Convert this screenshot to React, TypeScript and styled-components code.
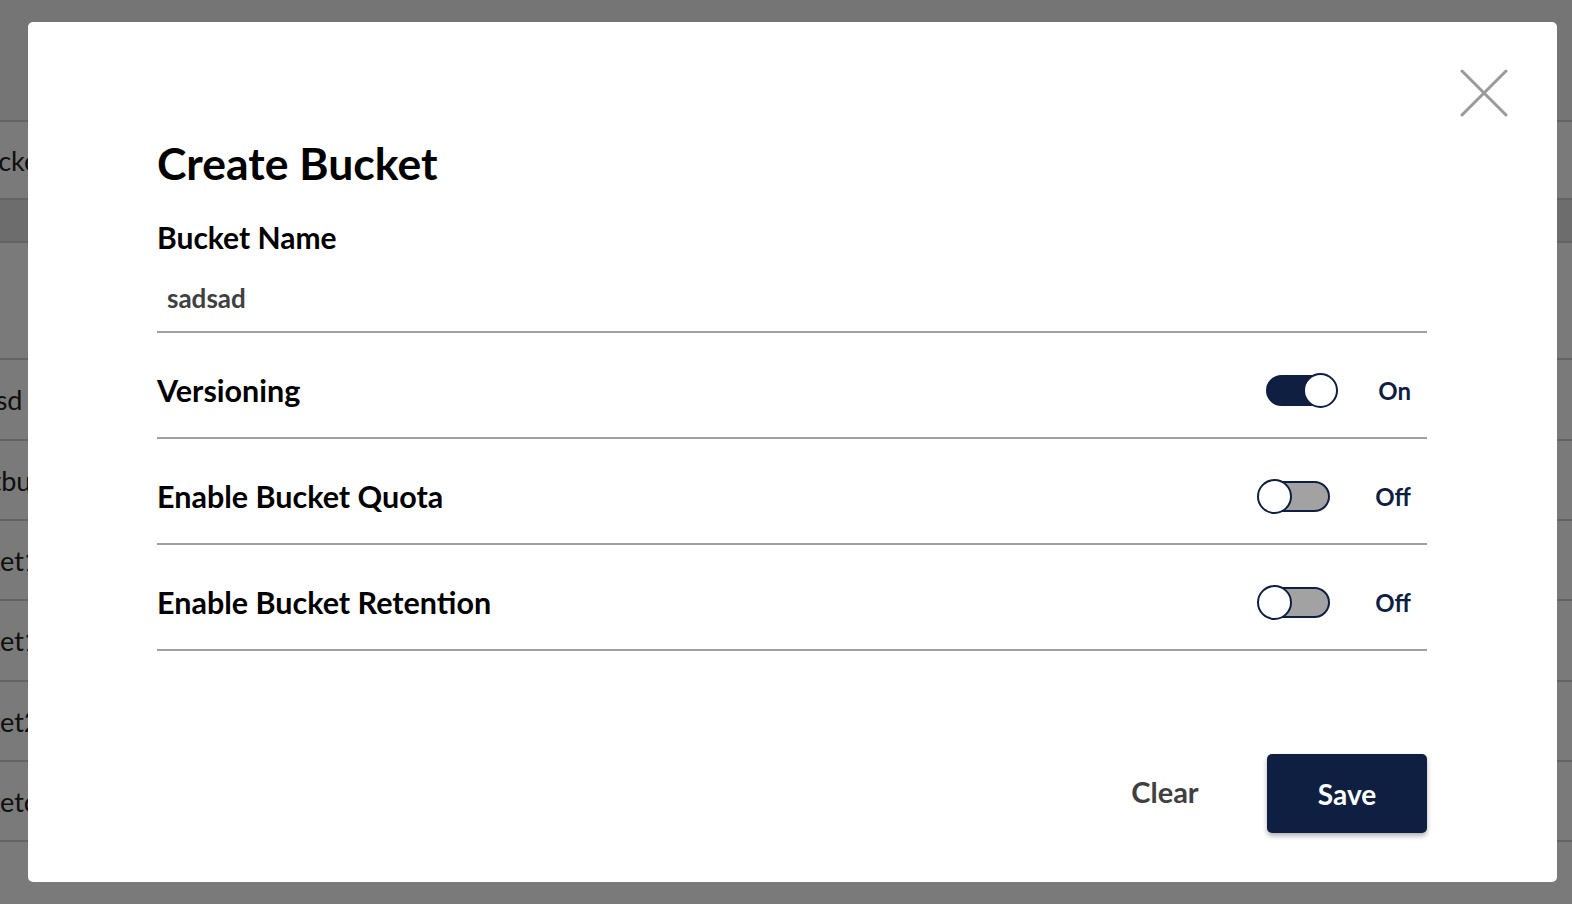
import React, { useState } from "react";
import styled, { createGlobalStyle } from "styled-components";

const navy = "#0f1f41";

const GlobalStyle = createGlobalStyle`
  html, body {
    margin: 0;
    padding: 0;
    width: 1572px;
    height: 904px;
    overflow: hidden;
    font-family: Lato, "Open Sans", "Liberation Sans", sans-serif;
    background: #fff;
  }
`;

/* underlying page, mostly hidden by the dialog */
const Page = styled.div`
  width: 1572px;
  height: 904px;
  overflow: hidden;
  background: #f4f4f4;
`;

const PageTitle = styled.h1`
  margin: -26px 0 0 -150px;
  font-size: 40px;
  font-weight: 700;
  color: #000;
  height: 146px;
`;

const BgTable = styled.div`
  width: 1750px;
  display: flex;
  flex-direction: column;
`;

const BgRow = styled.div<{ $h: number; $bg?: string }>`
  height: ${(p) => p.$h}px;
  box-sizing: border-box;
  display: flex;
  align-items: center;
  border-top: 2px solid #cfcfcf;
  background: ${(p) => p.$bg || "#fff"};
  font-size: 27px;
  color: #222;
`;

const BgCell = styled.span<{ $x: number }>`
  margin-left: ${(p) => p.$x}px;
  white-space: nowrap;
`;

const Backdrop = styled.div`
  position: fixed;
  inset: 0;
  background: rgba(0, 0, 0, 0.52);
  padding: 22px 15px 22px 28px;
  box-sizing: border-box;
  display: flex;
`;

const Dialog = styled.div`
  position: relative;
  flex: 1;
  background: #fff;
  border-radius: 5px;
  padding: 115px 130px 49px 129px;
  box-sizing: border-box;
  display: flex;
  flex-direction: column;
`;

const CloseButton = styled.button`
  position: absolute;
  top: 46px;
  right: 48px;
  width: 50px;
  height: 50px;
  border: none;
  background: none;
  padding: 0;
  cursor: pointer;
  display: flex;
  align-items: center;
  justify-content: center;
`;

const Title = styled.h2`
  margin: 0;
  font-size: 44.5px;
  line-height: 52px;
  font-weight: 700;
  color: #000;
`;

const FieldLabel = styled.label`
  margin-top: 30px;
  font-size: 30px;
  line-height: 36px;
  font-weight: 700;
  color: #000;
`;

const TextInput = styled.input`
  margin-top: 10px;
  height: 68px;
  box-sizing: border-box;
  border: none;
  border-bottom: 2px solid #a0a0a0;
  outline: none;
  padding: 0 10px;
  font-family: inherit;
  font-size: 26px;
  font-weight: 700;
  color: #404040;
  background: transparent;
`;

const ToggleRow = styled.div`
  height: 106px;
  box-sizing: border-box;
  border-bottom: 2px solid #a0a0a0;
  display: flex;
  align-items: center;
  justify-content: space-between;
  padding: 10px 16px 0 0;
`;

const RowLabel = styled.span`
  font-size: 30.5px;
  font-weight: 700;
  color: #000;
`;

const SwitchGroup = styled.div`
  display: flex;
  align-items: center;
  gap: 40px;
`;

const SwitchBox = styled.button`
  position: relative;
  width: 78px;
  height: 35px;
  border: none;
  background: none;
  padding: 0;
  cursor: pointer;
`;

const Track = styled.span<{ $on: boolean }>`
  position: absolute;
  left: 6px;
  right: 5px;
  top: 2px;
  height: 31px;
  box-sizing: border-box;
  border-radius: 16px;
  border: 2px solid ${navy};
  background: ${(p) => (p.$on ? navy : "#a2a2a2")};
`;

const Knob = styled.span<{ $on: boolean }>`
  position: absolute;
  top: 0;
  ${(p) => (p.$on ? "right: 0;" : "left: 0;")}
  width: 35px;
  height: 35px;
  box-sizing: border-box;
  border-radius: 50%;
  border: 2px solid ${navy};
  background: #fff;
`;

const SwitchText = styled.span`
  font-size: 24px;
  font-weight: 700;
  color: ${navy};
`;

const Actions = styled.div`
  margin-top: auto;
  display: flex;
  justify-content: flex-end;
  gap: 24px;
`;

const ClearButton = styled.button`
  width: 160px;
  height: 79px;
  border: none;
  background: none;
  font-family: inherit;
  font-size: 29px;
  font-weight: 700;
  color: #404040;
  cursor: pointer;
  padding: 0 0 4px 4px;
`;

const SaveButton = styled.button`
  width: 160px;
  height: 79px;
  border: none;
  border-radius: 5px;
  background: ${navy};
  color: #fff;
  font-family: inherit;
  font-size: 28px;
  font-weight: 700;
  cursor: pointer;
  box-shadow: 0 3px 5px rgba(0, 0, 0, 0.3);
`;

function Toggle({ label, initial }: { label: string; initial: boolean }) {
  const [on, setOn] = useState(initial);
  return (
    <ToggleRow>
      <RowLabel>{label}</RowLabel>
      <SwitchGroup>
        <SwitchBox onClick={() => setOn(!on)} aria-label={label}>
          <Track $on={on} />
          <Knob $on={on} />
        </SwitchBox>
        <SwitchText>{on ? "On" : "Off"}</SwitchText>
      </SwitchGroup>
    </ToggleRow>
  );
}

const bgRows = [
  { h: 78, text: "Bucket", x: -34 },
  { h: 43, bg: "#e4e4e4" },
  { h: 117 },
  { h: 81, text: "aasdsd", x: -58 },
  { h: 80, text: "testbu", x: -44 },
  { h: 80, text: "bucket1", x: -56 },
  { h: 81, text: "bucket1", x: -56 },
  { h: 80, text: "bucket2", x: -56 },
  { h: 80, text: "bucketc", x: -56 },
  { h: 64 },
];

export default function App() {
  const [name, setName] = useState("sadsad");
  return (
    <>
      <GlobalStyle />
      <Page>
        <PageTitle>Buckets</PageTitle>
        <BgTable>
          {bgRows.map((r, i) => (
            <BgRow key={i} $h={r.h} $bg={r.bg}>
              {r.text && <BgCell $x={r.x ?? 0}>{r.text}</BgCell>}
            </BgRow>
          ))}
        </BgTable>
      </Page>
      <Backdrop>
        <Dialog>
          <CloseButton aria-label="Close">
            <svg width="48" height="48" viewBox="0 0 48 48">
              <path
                d="M2 2 L46 46 M46 2 L2 46"
                stroke="#999"
                strokeWidth="3"
                strokeLinecap="round"
              />
            </svg>
          </CloseButton>
          <Title>Create Bucket</Title>
          <FieldLabel htmlFor="bucket-name">Bucket Name</FieldLabel>
          <TextInput
            id="bucket-name"
            value={name}
            onChange={(e) => setName(e.target.value)}
          />
          <Toggle label="Versioning" initial={true} />
          <Toggle label="Enable Bucket Quota" initial={false} />
          <Toggle label="Enable Bucket Retention" initial={false} />
          <Actions>
            <ClearButton onClick={() => setName("")}>Clear</ClearButton>
            <SaveButton>Save</SaveButton>
          </Actions>
        </Dialog>
      </Backdrop>
    </>
  );
}
